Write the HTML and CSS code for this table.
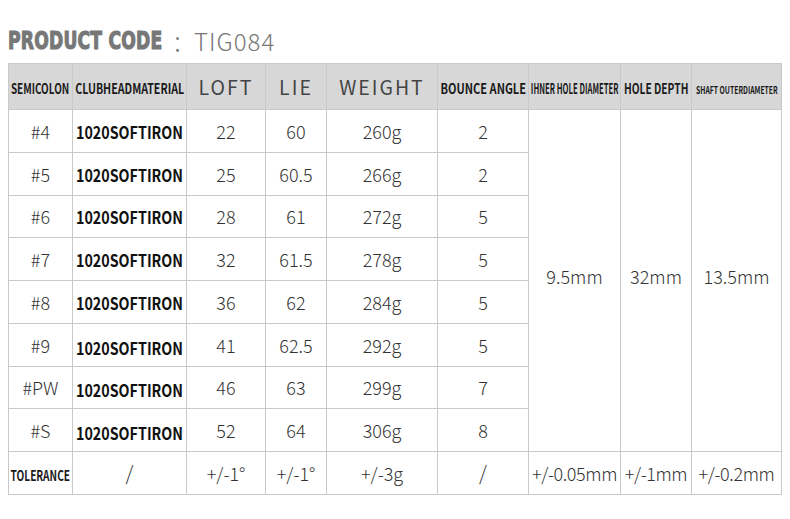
FILE: index.html
```html
<!DOCTYPE html>
<html>
<head>
<meta charset="utf-8">
<link rel="stylesheet" href="styles.css">
</head>
<body>
<div class="page">
  <h1 class="title"><span class="code-label">PRODUCT CODE</span><span class="colon">：</span><span class="code-value">TIG084</span></h1>
  <table class="spec">
    <colgroup>
      <col class="c1"><col class="c2"><col class="c3"><col class="c4"><col class="c5"><col class="c6"><col class="c7"><col class="c8"><col class="c9">
    </colgroup>
    <thead>
      <tr>
        <th><span class="sq h-semi">SEMICOLON</span></th>
        <th><span class="sq h-club">CLUBHEADMATERIAL</span></th>
        <th class="hl">LOFT</th>
        <th class="hl">LIE</th>
        <th class="hl">WEIGHT</th>
        <th><span class="sq h-bounce">BOUNCE ANGLE</span></th>
        <th><span class="sq h-ihner">IHNER HOLE DIAMETER</span></th>
        <th><span class="sq h-depth">HOLE DEPTH</span></th>
        <th><span class="sq h-shaft">SHAFT OUTERDIAMETER</span></th>
      </tr>
    </thead>
    <tbody>
      <tr><td>#4</td><td class="mat"><span>1020SOFTIRON</span></td><td>22</td><td>60</td><td>260g</td><td>2</td><td class="merged" rowspan="8">9.5mm</td><td class="merged" rowspan="8">32mm</td><td class="merged" rowspan="8">13.5mm</td></tr>
      <tr><td>#5</td><td class="mat"><span>1020SOFTIRON</span></td><td>25</td><td>60.5</td><td>266g</td><td>2</td></tr>
      <tr><td>#6</td><td class="mat"><span>1020SOFTIRON</span></td><td>28</td><td>61</td><td>272g</td><td>5</td></tr>
      <tr><td>#7</td><td class="mat"><span>1020SOFTIRON</span></td><td>32</td><td>61.5</td><td>278g</td><td>5</td></tr>
      <tr><td>#8</td><td class="mat"><span>1020SOFTIRON</span></td><td>36</td><td>62</td><td>284g</td><td>5</td></tr>
      <tr><td>#9</td><td class="mat low"><span>1020SOFTIRON</span></td><td>41</td><td>62.5</td><td>292g</td><td>5</td></tr>
      <tr><td>#PW</td><td class="mat low"><span>1020SOFTIRON</span></td><td>46</td><td>63</td><td>299g</td><td>7</td></tr>
      <tr><td>#S</td><td class="mat low"><span>1020SOFTIRON</span></td><td>52</td><td>64</td><td>306g</td><td>8</td></tr>
      <tr class="tol"><td><span class="sq h-tol">TOLERANCE</span></td><td class="slash">/</td><td>+/-1°</td><td>+/-1°</td><td>+/-3g</td><td class="slash">/</td><td class="tight">+/-0.05mm</td><td class="tight">+/-1mm</td><td class="tight">+/-0.2mm</td></tr>
    </tbody>
  </table>
</div>
</body>
</html>
```

FILE: styles.css
```css
* { box-sizing: border-box; }
html, body { margin: 0; padding: 0; background: #fff; }
body { font-family: "Noto Sans CJK SC", "Noto Sans", sans-serif; color: #333; }
.page { width: 790px; height: 519px; padding: 18px 0 0 8px; }
.title { margin: 0; height: 45px; display: flex; align-items: center; font-weight: normal; }
.code-label {
  font-family: "DejaVu Sans", sans-serif; font-weight: bold; font-size: 24.5px; color: #777;
  display: inline-block; transform: scaleX(0.7); transform-origin: left center; width: 164px; white-space: nowrap;
  -webkit-text-stroke: 1.2px #777; letter-spacing: 0.3px;
}
.colon { font-size: 22px; color: #777; width: 22px; font-weight: 300; }
.code-value { font-size: 24px; color: #777; font-weight: 300; letter-spacing: 1px; }
.spec { border-collapse: collapse; table-layout: fixed; width: 773px; }
.c1 { width: 64px; } .c2 { width: 114px; } .c3 { width: 79px; } .c4 { width: 61px; } .c5 { width: 111px; }
.c6 { width: 91px; } .c7 { width: 92px; } .c8 { width: 71px; } .c9 { width: 90px; }
.spec th, .spec td { border: 1px solid #c9c9c9; text-align: center; vertical-align: middle; padding: 0; white-space: nowrap; overflow: hidden; }
.spec thead tr { height: 46px; background: #d7d7d7; }
.spec tbody tr { height: 42.75px; }
.spec td { font-size: 18px; font-weight: 300; color: #333; }
.spec th { font-weight: bold; color: #222; }
.hl { font-size: 19.5px; font-weight: 400 !important; letter-spacing: 2px; color: #444 !important; }
.sq { display: inline-block; font-weight: bold; white-space: nowrap; font-size: 14px; color: #1a1a1a; }
.h-semi { transform: scaleX(0.71); margin: 0 -20px; }
.h-club { transform: scaleX(0.76); margin: 0 -30px; }
.h-bounce { transform: scaleX(0.79); margin: 0 -20px; }
.h-depth { transform: scaleX(0.73); margin: 0 -20px; }
.h-ihner { transform: scaleX(0.55); margin: 0 -40px; }
.h-shaft { font-size: 10.5px; transform: scaleX(0.65); margin: 0 -40px; }
.h-tol { transform: scaleX(0.72); margin: 0 -20px; }
.mat { text-align: left !important; padding-left: 3px !important; }
.mat span { display: inline-block; font-weight: bold; color: #111; font-size: 17px; transform: scaleX(0.84); transform-origin: left center; }
.mat.low span { padding-top: 5px; }
.merged { padding-bottom: 10px !important; }
.tight { letter-spacing: -0.4px; }
.slash { font-size: 20px !important; }
```
